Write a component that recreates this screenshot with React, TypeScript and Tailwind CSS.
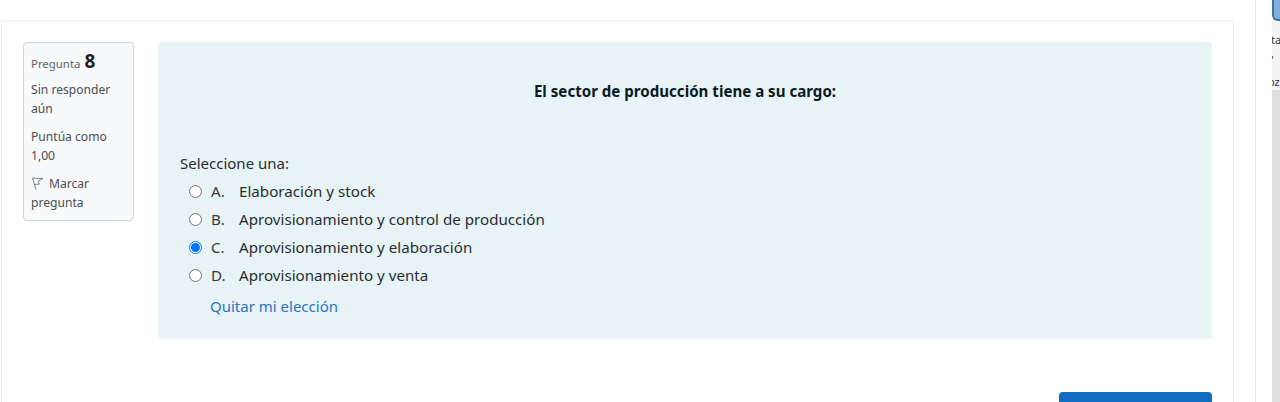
const options = [
  { letter: "A.", text: "Elaboración y stock", checked: false },
  { letter: "B.", text: "Aprovisionamiento y control de producción", checked: false },
  { letter: "C.", text: "Aprovisionamiento y elaboración", checked: true },
  { letter: "D.", text: "Aprovisionamiento y venta", checked: false },
];

const Radio = ({ checked }: { checked: boolean }) => (
  <span
    className={
      checked
        ? "flex h-[13px] w-[13px] items-center justify-center rounded-full border border-[#0075ff] bg-white"
        : "h-[13px] w-[13px] rounded-full border border-[#767676] bg-white"
    }
  >
    {checked && <span className="h-[9px] w-[9px] rounded-full bg-[#0075ff]" />}
  </span>
);

// pennant flag next to "Marcar pregunta"
const FlagIcon = () => (
  <svg viewBox="0 0 12 13" className="mr-[5px] ml-px inline h-[13px] w-3 -translate-y-px align-middle" fill="none" stroke="#7d8287" strokeWidth="1">
    <path d="M0.5 1 L4 12.5 M0.5 1 L11 1.5 L6 4.5 L7.5 7 L2.5 7.5" />
  </svg>
);

export default function App() {
  return (
    <div className="flex h-[402px] w-[1280px] overflow-hidden bg-white font-['Noto_Sans',sans-serif] text-[#1d2125]">
      <main className="w-[1256px] border-r border-[#e6e6e6] pl-px pt-5">
        <section className="h-[400px] w-[1233px] rounded-t border border-[#ececec] pl-[21px] pr-[21px] pt-[21px]">
          <div className="flex gap-6">
            <aside className="h-[179px] w-[111px] shrink-0 rounded-sm border border-[#cfd6dd] bg-[#f8f9fa] px-[7px] pt-[6px] text-[12.1px] leading-[19px] text-[#4a4f54]">
              <h3 className="flex items-baseline gap-1 text-[11.4px] leading-6 text-[#5f656b]">
                Pregunta <span className="text-[19px] font-bold text-[#1d2125]">8</span>
              </h3>
              <p className="mt-1">Sin responder aún</p>
              <p className="mt-[9px]">Puntúa como 1,00</p>
              <p className="mt-[9px]">
                <FlagIcon />
                Marcar pregunta
              </p>
            </aside>

            <div className="h-[297px] flex-1 rounded bg-[#e7f3f5]">
              <p className="mt-[37px] text-center text-[15.1px] leading-6 font-bold text-[#0b1a1f]">
                El sector de producción tiene a su cargo:
              </p>
              <div className="pl-[22px]">
                <p className="mt-[48px] text-[15px] leading-6 text-[#2a2e32]">Seleccione una:</p>
                <ul className="mt-[2px]">
                  {options.map((o) => (
                    <li key={o.letter} className="flex h-7 items-center pl-[9px] text-[15.15px] text-[#2a2e32]">
                      <Radio checked={o.checked} />
                      <span className="ml-[9px] w-7 text-[#373a3c]">{o.letter}</span>
                      <span>{o.text}</span>
                    </li>
                  ))}
                </ul>
                <a className="mt-[5px] ml-[30px] block text-[15px] leading-6 text-[#2a73bd]">Quitar mi elección</a>
              </div>
            </div>
          </div>
          <div className="mt-[53px] flex justify-end">
            <button className="h-10 w-[153px] rounded bg-[#0f6cbf]" />
          </div>
        </section>
      </main>
      <div className="w-4 shrink-0" />
      <div className="w-2 shrink-0 overflow-hidden bg-[#dedede]">
        <div className="h-[90px] bg-[#f4f4f4] text-[11px] leading-[14px] text-[#333]">
          <div className="h-[21px] w-[8px] rounded-bl-md border-b-2 border-l-2 border-[#3f6fa5] bg-[#7fb0dc]" />
          <p className="mt-3 -ml-[1px] whitespace-nowrap">ta</p>
          <p className="-ml-[1px]">,</p>
          <p className="mt-[14px] -ml-[4px] whitespace-nowrap">oz</p>
        </div>
      </div>
    </div>
  );
}
